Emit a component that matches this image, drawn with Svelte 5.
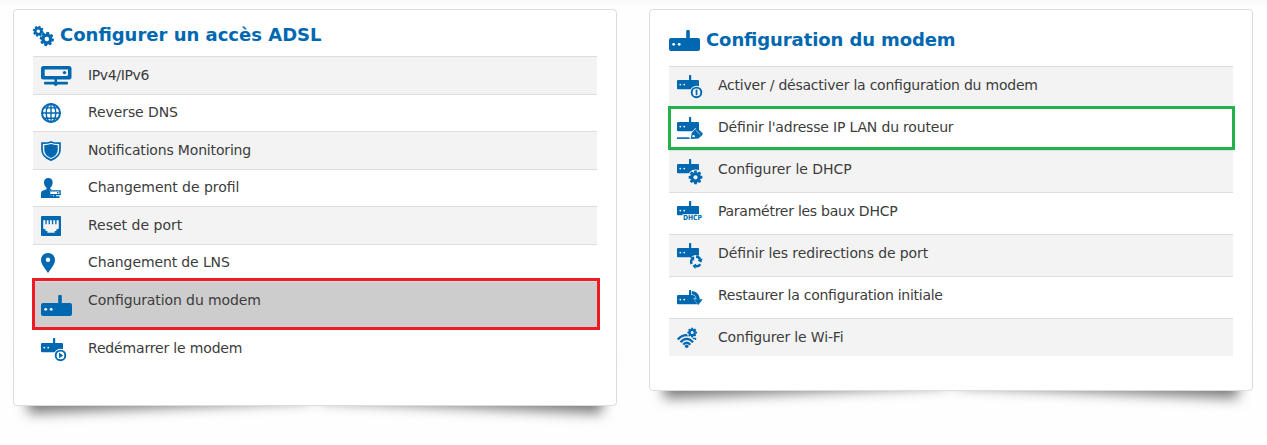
<script>
  const access = [
    { icon: 'server', label: 'IPv4/IPv6', w: 31, h: 20, track: -0.35 },
    { icon: 'globe', label: 'Reverse DNS', w: 20, h: 20, track: -0.09 },
    { icon: 'shield', label: 'Notifications Monitoring', w: 20, h: 20, track: -0.17 },
    { icon: 'profile', label: 'Changement de profil', w: 20, h: 20, track: -0.05 },
    { icon: 'port', label: 'Reset de port', w: 20, h: 20, track: 0 },
    { icon: 'pin', label: 'Changement de LNS', w: 14, h: 20, track: -0.12 },
    { icon: 'modem', label: 'Configuration du modem', w: 31, h: 21, mark: 'red', track: -0.1 },
    { icon: 'restart', label: 'Redémarrer le modem', w: 26, h: 25, track: -0.17 }
  ];
  const modem = [
    { icon: 'toggle', label: 'Activer / désactiver la configuration du modem', w: 26, h: 25, track: -0.23 },
    { icon: 'edit', label: "Définir l'adresse IP LAN du routeur", w: 26, h: 25, mark: 'green', track: -0.18 },
    { icon: 'gear', label: 'Configurer le DHCP', w: 26, h: 25, track: -0.06 },
    { icon: 'dhcp', label: 'Paramétrer les baux DHCP', w: 26, h: 25, track: -0.26 },
    { icon: 'redirect', label: 'Définir les redirections de port', w: 26, h: 25, track: -0.1 },
    { icon: 'restore', label: 'Restaurer la configuration initiale', w: 26, h: 25, track: -0.26 },
    { icon: 'wifi', label: 'Configurer le Wi-Fi', w: 20, h: 20, track: -0.17 }
  ];
  const teeth = [0, 45, 90, 135, 180, 225, 270, 315];
</script>

{#snippet cog(cx, cy, s, turn)}
  <g transform="translate({cx} {cy}) scale({s}) rotate({turn})">
    <circle r="3.9" fill="none" stroke="currentColor" stroke-width="3.200" />
    {#each teeth as a}
      <path d="M-1.900-4.800-1.300-7.300H1.300l.6 2.500z" transform="rotate({a})" />
    {/each}
  </g>
{/snippet}

{#snippet box()}
  <path d="M1 5h11V.6q0-.6.6-.6h1q.6 0 .6.6V5H21q1 0 1 1v7.300q0 1-1 1H1q-1 0-1-1V6q0-1 1-1z" />
  <g fill="var(--row)"><circle cx="3.300" cy="9.600" r=".9" /><circle cx="7.200" cy="9.600" r=".9" /></g>
{/snippet}

{#snippet glyph(name, w, h)}
  <svg width={w} height={h} viewBox="0 0 {w} {h}" fill="currentColor" aria-hidden="true">
    {#if name === 'server'}
      <path fill-rule="evenodd" d="M2.500 0h25.500q2.500 0 2.500 2.500v8.500q0 2.500-2.500 2.500H2.500q-2.500 0-2.500-2.500V2.500Q0 0 2.500 0zm1.200 3.500v6.600h22.300l1-1V3.500z" />
      <circle cx="23.500" cy="6.600" r="1.700" />
      <path d="M13.500 13h2.500v2.800h10q1 0 1 1.400t-1 1.400h-9.300q-.5 1.400-2 1.400t-2-1.400H4q-1 0-1-1.400t1-1.400h9.500z" />
    {:else if name === 'globe'}
      <g fill="none" stroke="currentColor" stroke-width="1.400">
        <circle cx="10" cy="10" r="9" stroke-width="2" />
        <ellipse cx="10" cy="10" rx="4.800" ry="9" />
        <path d="M10 1v18M1 10h18M3 4.900h14M3 15.200h14" />
      </g>
    {:else if name === 'shield'}
      <path d="M1 2.200Q7 2.300 10 .9q3 1.400 9 1.300v6.600q0 7-9 10.300-9-3.300-9-10.300z" fill="none" stroke="currentColor" stroke-width="1.700" />
      <path d="M3.300 4.200Q7.500 4.100 10 3q2.500 1.100 6.700 1.200v4.600q0 5.400-6.700 8.300-6.700-2.900-6.700-8.300z" />
    {:else if name === 'profile'}
      <path d="M7.300 0C10.200 0 11.600 1.800 11.600 4.300c0 2.300-.9 4.200-2.300 5.500v1.400l3 1.100H8v5h4V20H0v-5q0-1.700 1.600-2.200l4-1.600V9.800C4 8.500 3 6.600 3 4.300 3 1.800 4.600 0 7.300 0z" />
      <path d="M8.600 12.900h10.500v3.700H8.600z" fill="var(--row)" stroke="currentColor" stroke-width="1.400" />
      <path d="M13 17h2v1.200h3.500V20h-9v-1.800H13zM16 14.100h1.400v1.300H16z" />
    {:else if name === 'port'}
      <rect width="20" height="20" rx="1" />
      <path d="M2.200 4.200h15.600v8.300l-1.200.7h-1.200v1.700h-1.700v1.800H6.400v-1.800H4.600v-1.700H3.400l-1.200-.7z" fill="var(--row)" />
      <path d="M4.400 4h1.300v4.300H4.400zm3.200 0h1.300v4.300H7.600zm3.300 0h1.300v4.300h-1.300zm3.300 0h1.300v4.300h-1.300z" />
    {:else if name === 'pin'}
      <path fill-rule="evenodd" d="M7 0c4 0 7 3 7 7 0 3-1.500 5-3.500 8L7 20l-3.500-5C1.500 12 0 10 0 7c0-4 3-7 7-7zm0 4.600a2.200 2.200 0 1 0 0 4.400 2.200 2.200 0 0 0 0-4.400z" />
    {:else if name === 'modem'}
      <path d="M2 8h15.200V1q0-1 1-1h1.600q1 0 1 1v7H29q2 0 2 2v9q0 2-2 2H2q-2 0-2-2v-9q0-2 2-2z" />
      <g fill="var(--row)"><circle cx="4.700" cy="14.300" r="1.400" /><circle cx="10.200" cy="14.300" r="1.400" /></g>
    {:else if name === 'wifi'}
      <g fill="none" stroke="currentColor" stroke-width="2.300">
        <path d="M.8 11.600Q4.400 7.200 9.700 7.200q4.600 0 8 3.600" />
        <path d="M3.600 14.200q2.600-3.400 6.100-3.400t6.300 3.400" />
        <path d="M6.300 16.700q1.500-2.100 3.400-2.100t3.500 2.100" />
      </g>
      <circle cx="9.700" cy="18.200" r="1.800" />
      <circle cx="15.200" cy="4.600" r="5.400" fill="var(--row)" />
      {@render cog(15.2, 4.6, 0.66, 0)}
      <circle cx="18.400" cy="11" r="1" />
    {:else if name === 'restore'}
      <g transform="translate(0 5)">
        {@render box()}
        <path d="M14.800 2.600Q20.500 3 21.300 9.200" fill="none" stroke="var(--row)" stroke-width="4.400" />
        <path d="M16.300 8.600h9.900L21.300 15.400z" fill="var(--row)" />
        <path d="M14.800 2.600Q20.500 3 21.300 9.800" fill="none" stroke="currentColor" stroke-width="3.400" />
        <path d="M16.900 9.200h8.800L21.300 15z" />
      </g>
    {:else}
      {@render box()}
      {#if name === 'restart' || name === 'toggle'}
        <circle cx="19.500" cy="17.400" r="6.700" fill="var(--row)" />
        <circle cx="19.500" cy="17.400" r="4.800" fill="none" stroke="currentColor" stroke-width="1.900" />
        {#if name === 'restart'}
          <path d="M18 14.600v5.600l4.200-2.800z" />
        {:else}
          <rect x="18.700" y="14.600" width="1.700" height="5.600" rx=".7" />
        {/if}
      {:else if name === 'edit'}
        <path d="m12.600 21.500 1.500-6 4.300-4.500 8 7-4.800 4.300z" fill="var(--row)" />
        <path d="M0 20.300h12.500v1.600H0z" />
        <path d="m13.600 22 1.200-6.200 4.100-4.200q1.100-.7 2.200.3l4.100 3.800q1 1.200.2 2.200l-4 3.700z" />
        <path d="m15.200 20.300.6-2.500 1.700.4.500 1.900z" fill="var(--row)" />
        <path d="m18.700 13.300 4.600 4.300" fill="none" stroke="var(--row)" stroke-width=".6" />
      {:else if name === 'gear'}
        <circle cx="18.500" cy="18.300" r="7.800" fill="var(--row)" />
        {@render cog(18.5, 18.3, 0.94, 0)}
      {:else if name === 'dhcp'}
        <path d="M5.500 13.200H26V20H5.500z" fill="var(--row)" />
        <text x="6" y="19.200" textLength="19" lengthAdjust="spacingAndGlyphs">DHCP</text>
      {:else if name === 'redirect'}
        <circle cx="19" cy="18.700" r="6.700" fill="var(--row)" />
        {#each [70, 190, 310] as a}
          <g transform="translate(19 18.600) rotate({a})">
            <path d="M-4.700-1.800Q-3.400-4.600-.3-4.600" fill="none" stroke="currentColor" stroke-width="2.400" />
            <path d="M-.6-7.300v5.400L2.800-4.600z" />
          </g>
        {/each}
      {/if}
    {/if}
  </svg>
{/snippet}

{#snippet list(items)}
  <ul>
    {#each items as item}
      <li class={[item.mark, item.icon]}>
        <span class="icon">{@render glyph(item.icon, item.w, item.h)}</span>
        <span class="label" style:letter-spacing="{item.track}px">{item.label}</span>
      </li>
    {/each}
  </ul>
{/snippet}

<main>
  <section class="card access">
    <div class="body">
      <h2>
        <svg width="21" height="20" viewBox="0 0 21 20" fill="currentColor" aria-hidden="true">
          {@render cog(5.3, 5.2, 0.74, 15)}
          {@render cog(13.8, 13, 0.97, 10)}
        </svg>
        <span>Configurer un accès ADSL</span>
      </h2>
      {@render list(access)}
    </div>
  </section>
  <section class="card setup">
    <div class="body">
      <h2>
        {@render glyph('modem', 31, 21)}
        <span>Configuration du modem</span>
      </h2>
      {@render list(modem)}
    </div>
  </section>
</main>

<style>
  :global(body) {
    background: #fefefe;
  }
  main {
    box-sizing: border-box;
    height: 445px;
    padding: 9px 14px 0 13px;
    display: flex;
    justify-content: space-between;
    align-items: flex-start;
    overflow: hidden;
    background: linear-gradient(#f9f9f9, #fefefe 8px);
    font-family: 'DejaVu Sans', sans-serif;
    font-size: 14px;
    line-height: 20px;
    color: #3c3c3c;
    font-feature-settings: 'liga' 1;
  }
  .card {
    position: relative;
    z-index: 0;
    width: 604px;
  }
  .card::before,
  .card::after {
    content: '';
    position: absolute;
    z-index: -1;
    bottom: 14px;
    left: 13px;
    width: 282px;
    height: 66px;
    box-shadow: 0 15px 13px #777;
    transform: rotate(-2.600deg);
  }
  .card::after {
    left: auto;
    right: 13px;
    transform: rotate(2.600deg);
  }
  .body {
    box-sizing: border-box;
    padding: 0 19px;
    background: #fff;
    border: 1px solid #ddd;
    border-radius: 4px;
  }
  .access .body {
    height: 397px;
  }
  .setup .body {
    height: 382px;
  }
  h2 {
    display: flex;
    align-items: flex-start;
    margin: 0;
    padding-top: 16px;
    height: 30px;
    gap: 6px;
    color: #0068b1;
    font-size: 18px;
    line-height: 20px;
    font-weight: bold;
  }
  .access h2 span {
    margin-top: -1px;
  }
  .setup h2 {
    padding-top: 20px;
    height: 36px;
    letter-spacing: -0.1px;
  }
  ul {
    list-style: none;
    margin: 0;
    padding: 0;
  }
  li {
    --row: #fff;
    position: relative;
    box-sizing: border-box;
    display: flex;
    align-items: flex-start;
    height: 37.5px;
    padding: 8px;
    border-top: 1px solid #ddd;
    background: var(--row);
  }
  li:nth-child(odd) {
    --row: #f3f3f3;
  }
  .access li:nth-child(even) {
    padding-top: 7.5px;
  }
  .setup li {
    height: 42px;
  }
  .setup li.wifi {
    height: 38px;
  }
  .icon {
    width: 47px;
    color: #0068b1;
    display: flex;
  }
  .setup .icon {
    width: 41px;
  }
  .access .icon {
    padding-top: 1px;
  }
  .setup .wifi .icon {
    padding-top: 1px;
  }
  .access li.modem {
    --row: #cdcdcd;
    height: 48px;
  }
  .modem .icon {
    padding-top: 5px;
    --row: #fff;
  }
  .access li.restart {
    border-top-color: transparent;
    padding-top: 8px;
  }
  .access .restart .icon {
    padding-top: 0;
  }
  .red::after,
  .green::after {
    content: '';
    position: absolute;
    z-index: 1;
    border: 3px solid #ed1c24;
    inset: -4px -3px -1px -1px;
  }
  .green::after {
    border-color: #22b14c;
    inset: -3px -2px 0 -1px;
  }
  .setup h2 svg {
    --row: #fff;
  }
  text {
    font: bold 7px 'DejaVu Sans', sans-serif;
    letter-spacing: 0;
  }
  svg {
    display: block;
    flex: none;
    overflow: visible;
  }
</style>
